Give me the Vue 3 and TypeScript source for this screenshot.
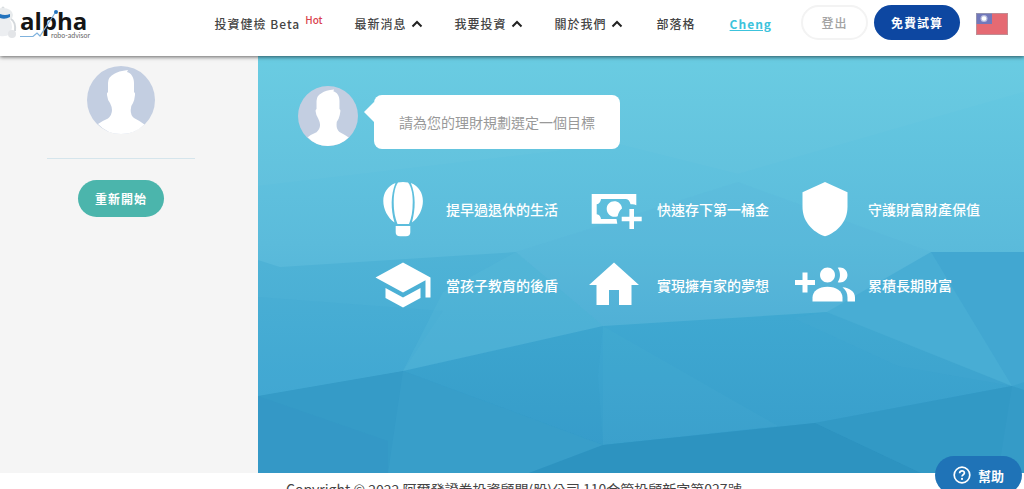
<script setup lang="ts">
interface NavItem {
  label: string
  menu: boolean
  badge?: string
}

interface Goal {
  label: string
  paths: string[]
  size: number
}

const navItems: NavItem[] = [
  { label: '投資健檢 Beta', menu: false, badge: 'Hot' },
  { label: '最新消息', menu: true },
  { label: '我要投資', menu: true },
  { label: '關於我們', menu: true },
]

const goals: Goal[] = [
  {
    label: '提早過退休的生活',
    size: 60,
    paths: [
      'M25 3.5Q30 2.5 35 3.5C38.5 8 39.7 15 39.7 23C39.7 32 38.5 39 36 45H24.5C22 39 20.7 32 20.7 23C20.7 15 22 8 25 3.5Z',
      'M22.500 4C14.500 7 10.300 14 10.300 22C10.300 30 14.500 38.500 21.500 43.500C17.600 30 17.600 16 22.500 4Z',
      'M37.900 4C45.700 7 49.900 14 49.900 22C49.900 30 45.900 38.500 38.900 43.500C42.800 30 42.800 16 37.900 4Z',
      'M22.700 47H37.300V53Q37.300 57.300 33 57.300H27Q22.700 57.300 22.700 53Z',
    ],
  },
  {
    label: '快速存下第一桶金',
    size: 60,
    paths: [
      'M7.700 15H52.300V26.200Q50 24.800 46.500 25.300Q45.500 20.500 42 20H17Q16.500 24.500 12.700 25.300V35.300Q16.500 36 17 40H32.500L33.300 44.700H7.700Z',
      'M30.300 22.300C34 22.300 37.800 25 38 29.500C35.500 31.500 34.300 34 33.700 37.200C28 39.500 22.700 35 22.700 30C22.700 25.500 26 22.300 30.300 22.300Z',
      'M45.400 30H50V37.700H57.700V42.300H50V50H45.400V42.300H37.700V37.700H45.400Z',
    ],
  },
  {
    label: '守護財富財產保值',
    size: 60,
    paths: ['M30 3L52.500 13.300V28C52.500 42 43 53 30 57.300C17 53 7.500 42 7.500 28V13.300Z'],
  },
  {
    label: '當孩子教育的後盾',
    size: 24,
    paths: ['M5 13.180v4L12 21l7-3.820v-4L12 17l-7-3.820zM12 3L1 9l11 6 9-4.910V17h2V9L12 3z'],
  },
  {
    label: '實現擁有家的夢想',
    size: 24,
    paths: ['M10 20v-6h4v6h5v-8h3L12 3 2 12h3v8z'],
  },
  {
    label: '累積長期財富',
    size: 24,
    paths: [
      'M8 10H5V7H3v3H0v2h3v3h2v-3h3v-2z',
      'M18 11c1.660 0 2.990-1.340 2.990-3S19.660 5 18 5c-.320 0-.630.050-.910.140.570.810.900 1.790.900 2.860s-.340 2.040-.900 2.860c.280.090.590.140.910.140z',
      'M13 11c1.660 0 2.990-1.340 2.990-3S14.660 5 13 5c-1.660 0-3 1.340-3 3s1.340 3 3 3z',
      'M13 12.700c-3.500 0-6 1.800-6 4.300v1.600h12v-1.600c0-2.500-2.500-4.300-6-4.300z',
      'M19 12.900c1.400 1.100 2 2.400 2 4.100v1.600H24v-1.600c0-2.300-2.200-3.900-5-4.100z',
    ],
  },
]

const silhouette =
  'M41 4L40 6C44 7 47 11 47 17V26Q48.500 27 48 29Q47.500 34 46 37Q43.500 40 43.700 44Q43.500 49 47 52Q53 55 57.500 58.500Q48 68 34 68Q20 68 11 58Q15 55 21 52.500Q25 49 25 44Q25 41 23 37Q20.500 34 20 29Q19.500 27 21 26V17Q21 11 27 8Q31 5 41 4Z'
</script>

<template>
  <div class="page">
    <header class="topbar">
      <a class="logo" href="#" aria-label="alpha robo-advisor">
        <svg width="92" height="44" viewBox="0 0 92 44">
          <circle cx="3" cy="8" r="1.500" fill="#d9dde0" />
          <ellipse cx="3" cy="15" rx="10" ry="7" fill="#e8ebed" />
          <path d="M0 14Q5 16 10 14V17Q5 20 0 18Z" fill="#2272bd" />
          <path d="M0 20H10Q14 26 10 34Q6 37 0 36Z" fill="#eceef1" />
          <path d="M11 19Q16 22 15 31" fill="none" stroke="#d4d8dc" stroke-width="2" />
          <circle cx="12" cy="34" r="4" fill="#e3e5e8" />
          <text class="logo-name" x="20" y="30">alpha</text>
          <text class="logo-sub" x="51" y="38">robo-advisor</text>
          <path d="M20 36.500H33L37 33L40 36L55 13" fill="none" stroke="#7fb2dd" stroke-width="1.200" />
          <circle cx="56" cy="12" r="2" fill="#2272bd" />
        </svg>
      </a>
      <nav class="nav">
        <a v-for="item in navItems" :key="item.label" class="nav-link" href="#">
          {{ item.label }}
          <sup v-if="item.badge" class="hot">{{ item.badge }}</sup>
          <svg v-if="item.menu" class="caret" width="12" height="8" viewBox="0 0 12 8">
            <path d="M1.500 6.500L6 2L10.500 6.500" fill="none" stroke="#222" stroke-width="2" />
          </svg>
        </a>
        <a class="nav-link plain" href="#">部落格</a>
        <a class="nav-link plain user" href="#">Cheng</a>
      </nav>
      <div class="actions">
        <button class="btn outline" type="button">登出</button>
        <button class="btn primary" type="button">免費試算</button>
      </div>
      <button class="flag" type="button" aria-label="繁體中文">
        <svg width="32" height="22" viewBox="0 0 32 22">
          <rect width="32" height="22" fill="#e56a73" />
          <rect width="16" height="11" fill="#7178bb" />
          <circle cx="8" cy="5.500" r="3.500" fill="#b9bddf" />
          <circle cx="8" cy="5.500" r="2.300" fill="#fff" />
          <rect x=".5" y=".5" width="31" height="21" fill="none" stroke="#a9a4a9" stroke-opacity=".6" />
        </svg>
      </button>
    </header>

    <div class="body">
      <aside class="sidebar">
        <svg class="avatar-side" viewBox="0 0 68 68">
          <circle cx="34" cy="34" r="34" fill="#c3cee1" />
          <path :d="silhouette" fill="#fff" />
        </svg>
        <hr class="rule" />
        <button class="btn restart" type="button">重新開始</button>
      </aside>

      <main class="stage">
        <svg class="facets" viewBox="0 0 766 417" preserveAspectRatio="none" aria-hidden="true">
          <defs>
            <linearGradient id="sky" x1="0" y1="0" x2="0" y2="1">
              <stop offset="0" stop-color="#67cbe2" />
              <stop offset=".45" stop-color="#5bbbdb" />
              <stop offset=".65" stop-color="#51b2d6" />
            </linearGradient>
            <linearGradient id="mid" gradientUnits="userSpaceOnUse" x1="0" y1="196" x2="0" y2="340">
              <stop offset="0" stop-color="#4fb3d6" />
              <stop offset="1" stop-color="#43a9d3" />
            </linearGradient>
            <linearGradient id="deep" gradientUnits="userSpaceOnUse" x1="0" y1="260" x2="0" y2="390">
              <stop offset="0" stop-color="#3fa8d1" />
              <stop offset="1" stop-color="#389ecb" />
            </linearGradient>
          </defs>
          <rect width="766" height="417" fill="url(#sky)" />
          <path d="M0 130L360 88L480 118L766 36V0H0Z" fill="#fff" fill-opacity=".02" />
          <path d="M258 196L480 126L673 196L569 256L345 270Z" fill="#4fa9d8" fill-opacity=".1" />
          <path d="M0 204L22 211L258 196L345 270L145 315L0 340Z" fill="url(#mid)" />
          <path d="M673 196H766V330H754L569 256Z" fill="#48add4" />
          <path d="M673 196H766V330H754Z" fill="#42a7d1" />
          <path d="M0 241L185 255L145 315L0 340Z" fill="#329dce" fill-opacity=".1" />
          <path d="M258 196L185 236L145 315L345 270Z" fill="#62c1dd" fill-opacity=".18" />
          <path d="M0 340L145 315L345 270L569 256L754 330L766 326V417H0Z" fill="url(#deep)" />
          <path d="M345 270L520 370L345 389Z" fill="#56b7da" fill-opacity=".1" />
          <path d="M569 256L754 330L640 310L535 262Z" fill="#55b2da" fill-opacity=".1" />
          <path d="M345 270L145 315L345 389L340 320Z" fill="#278fc2" fill-opacity=".06" />
          <path d="M0 340L145 315L345 389L557 367L754 330L766 334V417H0Z" fill="#359bc7" />
          <path d="M0 340L130 385V417H0Z" fill="#2c90c0" fill-opacity=".15" />
          <path d="M145 315L345 389L271 417H130Z" fill="#3ea3cf" fill-opacity=".35" />
          <path d="M271 417L345 389L557 367L663 417Z" fill="#2d93c0" />
          <path d="M557 367L754 330L740 417H663Z" fill="#3095c3" fill-opacity=".4" />
        </svg>

        <div class="chat">
          <svg class="avatar-chat" viewBox="0 0 68 68">
            <circle cx="34" cy="34" r="34" fill="#c3cee1" />
            <path :d="silhouette" fill="#fff" />
          </svg>
          <p class="bubble">請為您的理財規劃選定一個目標</p>
        </div>

        <div class="goals">
          <button v-for="goal in goals" :key="goal.label" class="goal" type="button">
            <svg class="goal-icon" :viewBox="`0 0 ${goal.size} ${goal.size}`">
              <path v-for="d in goal.paths" :key="d" :d="d" fill="#fff" />
            </svg>
            <span>{{ goal.label }}</span>
          </button>
        </div>
      </main>
    </div>

    <footer class="footer">Copyright © 2022 阿爾發證券投資顧問(股)公司 110金管投顧新字第027號</footer>

    <button class="help" type="button">
      <svg width="18" height="18" viewBox="0 0 18 18">
        <circle cx="9" cy="9" r="7.800" fill="none" stroke="#fff" stroke-width="1.700" />
        <path d="M6.600 7.200C6.600 4 11.500 4.200 11.400 7C11.300 8.800 9 8.700 9 10.600" fill="none" stroke="#fff" stroke-width="1.700" />
        <circle cx="9" cy="12.900" r="1.100" fill="#fff" />
      </svg>
      幫助
    </button>
  </div>
</template>

<style>
body {
  margin: 0;
}
</style>

<style scoped>
.page {
  display: flex;
  flex-direction: column;
  height: 100vh;
  overflow: hidden;
  background: #fff;
  color: #444;
  font-family: "Noto Sans CJK TC", "Noto Sans", sans-serif;
  font-size: 14px;
}

button {
  font-family: inherit;
  border: 0;
  padding: 0;
  cursor: pointer;
}

.topbar {
  position: relative;
  z-index: 1;
  display: flex;
  align-items: center;
  flex: none;
  height: 56px;
  padding-right: 16px;
  box-sizing: border-box;
  background: #fff;
  box-shadow: 0 1px 4px rgba(0, 0, 0, 0.6);
}

.logo {
  align-self: flex-start;
  height: 44px;
}

.logo-name {
  font-family: "Open Sans", sans-serif;
  font-size: 24px;
  font-weight: 700;
  fill: #151515;
}

.logo-sub {
  font-family: Lato, sans-serif;
  font-size: 7px;
  fill: #666;
}

.nav {
  display: flex;
  align-items: center;
  gap: 32px;
  margin-left: auto;
  margin-right: 29px;
  padding-bottom: 8px;
}

.nav-link {
  display: flex;
  align-items: center;
  color: #444;
  font-size: 12px;
  font-weight: 500;
  line-height: 20px;
  letter-spacing: 1px;
  text-decoration: none;
  white-space: nowrap;
}

.plain {
  padding-left: 2px;
}

.user {
  color: #3cc3dc;
  font-weight: 700;
  text-decoration: underline;
}

.hot {
  align-self: flex-start;
  margin-left: 5px;
  color: #d9434e;
  font-size: 10px;
  line-height: 12px;
  letter-spacing: 0;
}

.caret {
  margin-left: 4px;
}

.actions {
  display: flex;
  gap: 6px;
  padding-bottom: 12px;
}

.btn {
  height: 35px;
  border-radius: 18px;
  font-size: 12px;
  font-weight: 700;
  letter-spacing: 1px;
  white-space: nowrap;
}

.outline {
  width: 67px;
  border: 2px solid #f3f3f3;
  background: #fff;
  color: #a3a3a3;
  font-weight: 500;
}

.primary {
  width: 86px;
  background: #0d47a1;
  color: #fff;
}

.flag {
  height: 22px;
  margin-left: 16px;
  margin-bottom: 8px;
  background: none;
}

.flag svg {
  display: block;
}

.body {
  display: flex;
  flex: 1;
}

.sidebar {
  display: flex;
  flex: 0 0 258px;
  flex-direction: column;
  align-items: center;
  box-sizing: border-box;
  padding: 10px 16px 0 0;
  background: #f5f5f5;
}

.avatar-side {
  width: 68px;
  height: 68px;
}

.rule {
  width: 148px;
  height: 1px;
  margin: 24px 0 21px;
  border: 0;
  background: #d5e5ec;
}

.restart {
  width: 86px;
  height: 37px;
  border-radius: 19px;
  background: #4bb5ac;
  color: #fff;
}

.stage {
  position: relative;
  flex: 1;
  padding: 27px 18px 0 40px;
}

.facets {
  position: absolute;
  inset: 0;
  width: 100%;
  height: 100%;
}

.chat {
  position: relative;
  display: flex;
  align-items: center;
  gap: 16px;
}

.avatar-chat {
  width: 60px;
  height: 60px;
}

.bubble {
  position: relative;
  margin: 12px 0 0;
  padding: 17px 25px;
  border-radius: 8px;
  background: #fff;
  color: #999;
  font-size: 14px;
  line-height: 20px;
}

.bubble::before {
  content: "";
  position: absolute;
  top: 7px;
  left: -10px;
  border: 10px solid transparent;
  border-left: 0;
  border-right-color: #fff;
}

.goals {
  position: relative;
  display: grid;
  grid-template-columns: repeat(3, 1fr);
  gap: 16px 0;
  margin-top: 30px;
  padding-left: 75px;
}

.goal {
  display: flex;
  align-items: center;
  gap: 13px;
  background: none;
  color: #fff;
  font-size: 14px;
  font-weight: 500;
  line-height: 20px;
  white-space: nowrap;
}

.goal-icon {
  flex: none;
  width: 60px;
  height: 60px;
}

.footer {
  flex: none;
  height: 16px;
  padding-left: 286px;
  box-sizing: border-box;
  line-height: 32px;
  white-space: nowrap;
}

.help {
  position: fixed;
  right: 2px;
  bottom: -5px;
  z-index: 2;
  display: flex;
  align-items: center;
  justify-content: center;
  gap: 7px;
  width: 87px;
  height: 38px;
  border-radius: 19px;
  background: #1f73b7;
  color: #fff;
  font-size: 13px;
  font-weight: 700;
}
</style>
